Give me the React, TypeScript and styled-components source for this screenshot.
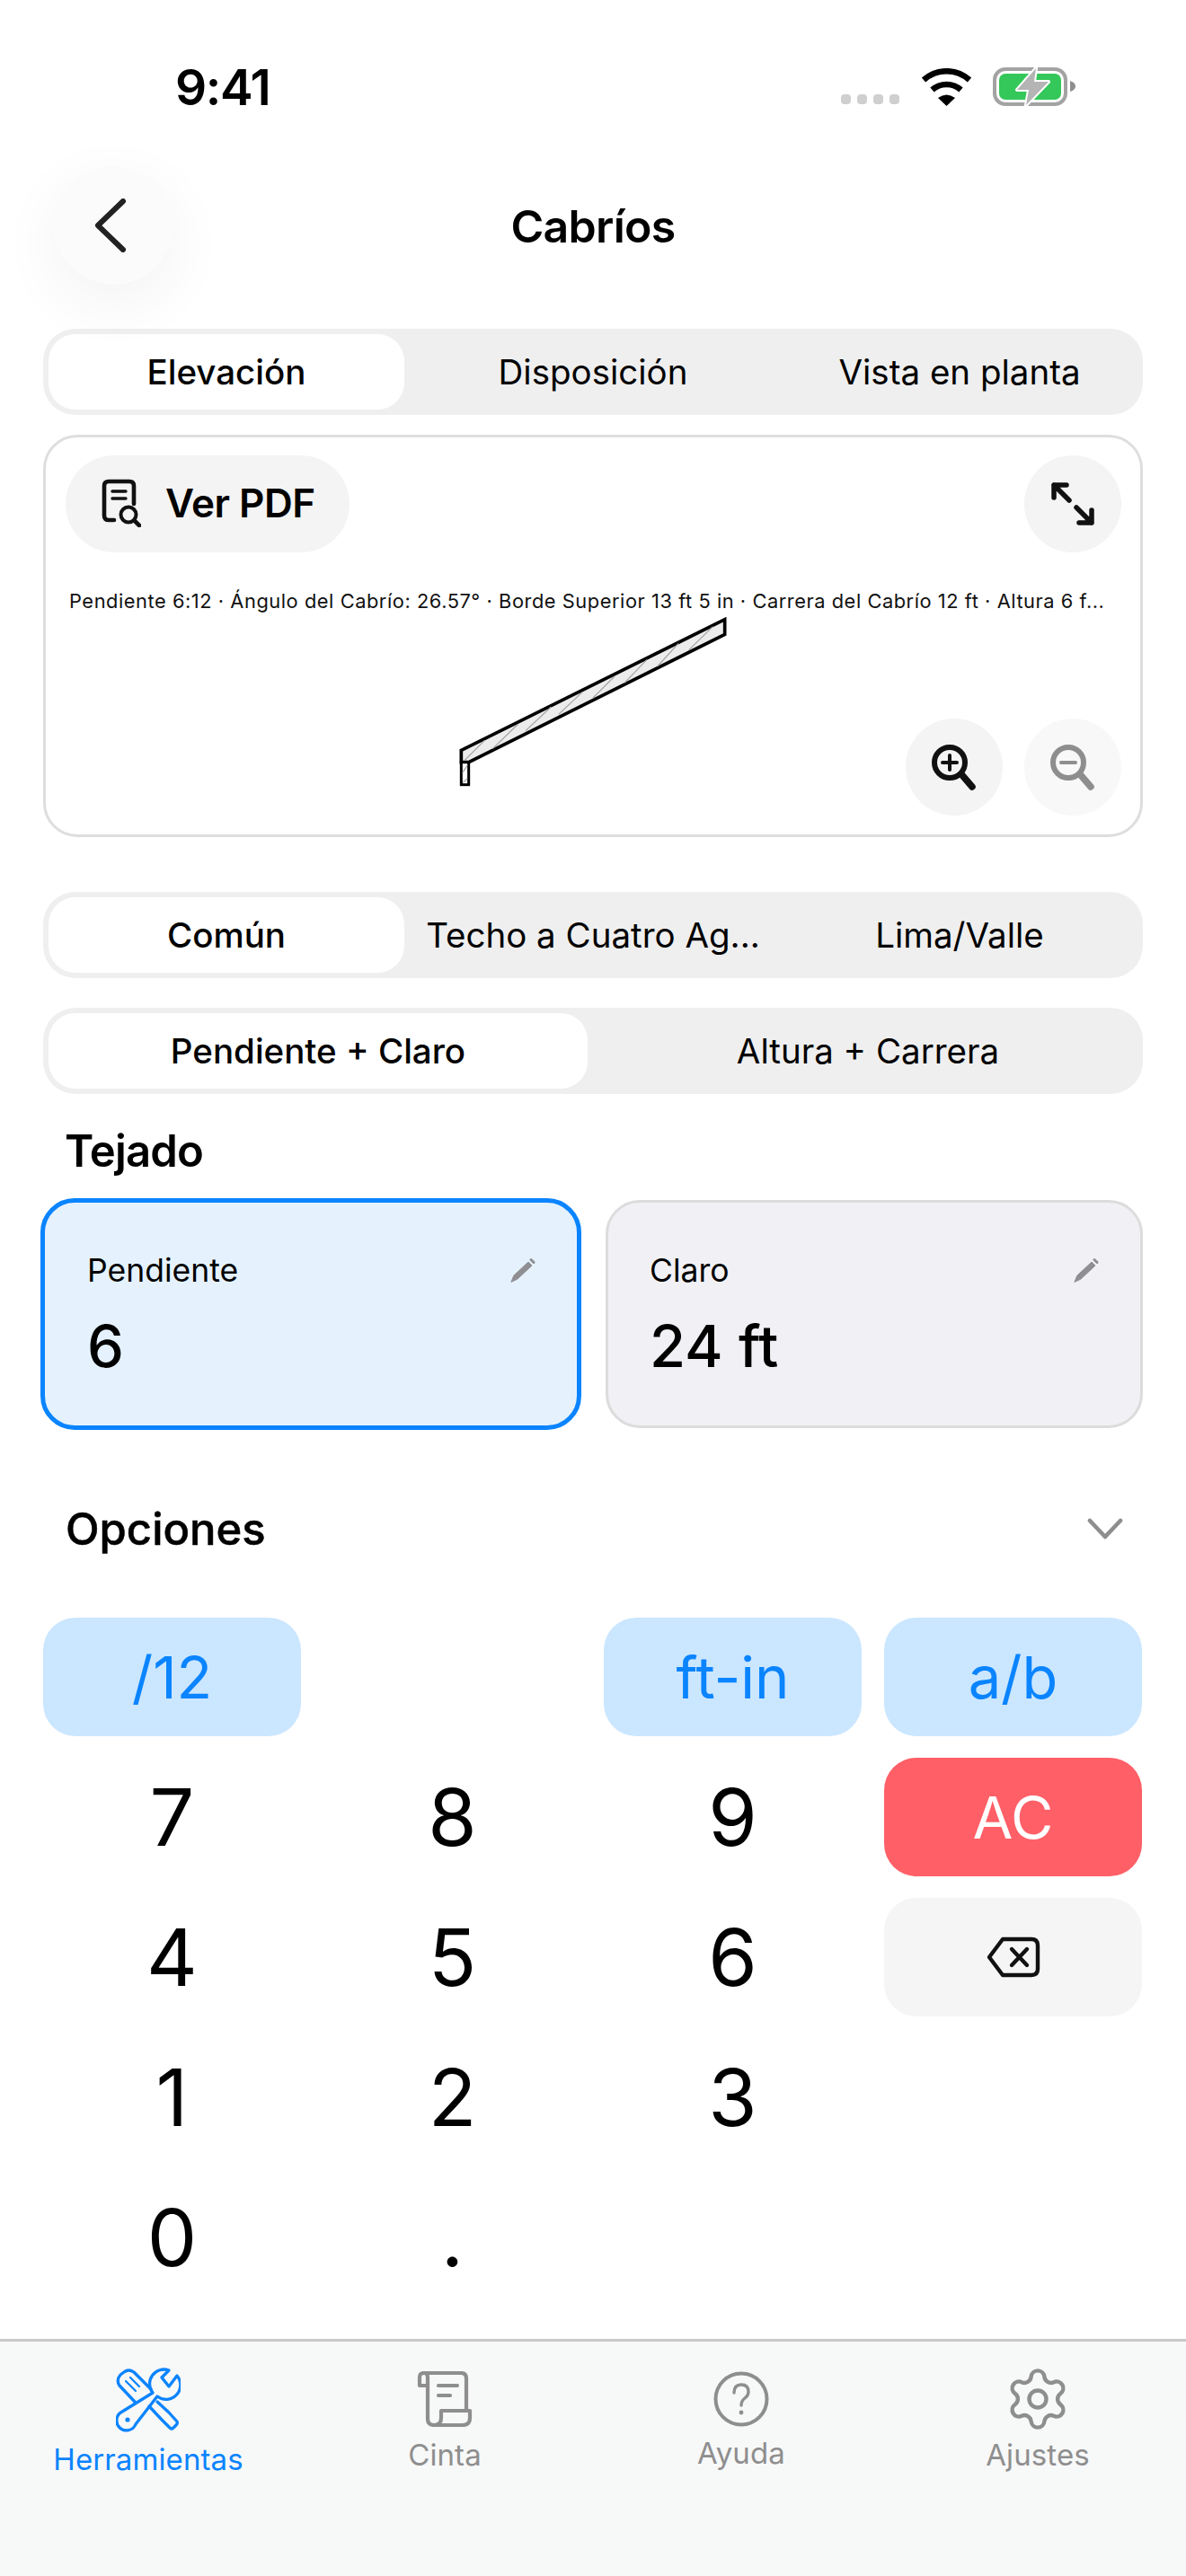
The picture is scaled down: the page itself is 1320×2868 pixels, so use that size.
import React from "react";
import styled, { createGlobalStyle } from "styled-components";

const Global = createGlobalStyle`
  html, body { margin: 0; padding: 0; background: #fff; }
  body { font-family: Inter, "Noto Sans", "Liberation Sans", sans-serif; color: #000; }
  * { box-sizing: border-box; }
`;

const Page = styled.div`
  width: 1320px; height: 2868px; display: flex; flex-direction: column;
  overflow: hidden; background: #fff;
`;
const StatusBar = styled.div`
  height: 185px; padding: 75px 123px 0 195px; display: flex;
  justify-content: space-between; align-items: flex-start;
`;
const Time = styled.div`font-size: 55px; font-weight: 600; line-height: 44px; letter-spacing: -1.4px;`;
const StatusIcons = styled.div`display: flex; align-items: flex-end; gap: 23px; height: 43px;`;
const Header = styled.div`
  height: 133px; margin: 0 48px; display: flex; align-items: center; justify-content: center; position: relative;
`;
const BackButton = styled.div`
  position: absolute; left: 12px; top: 0; width: 132px; height: 132px; border-radius: 50%;
  background: #fbfbfb; box-shadow: 0 20px 70px rgba(0,0,0,.055);
  display: flex; align-items: center; justify-content: center; padding-right: 6px;
`;
const Title = styled.h1`margin: 0; font-size: 50px; font-weight: 600; letter-spacing: -.7px;`;
const Content = styled.div`padding: 48px 48px 0; display: flex; flex-direction: column;`;
const Segment = styled.div<{ $cols: number; $mt?: number }>`
  display: grid; grid-template-columns: repeat(${p => p.$cols}, 1fr); gap: 12px; padding: 6px;
  height: 96px; border-radius: 36px; background: #efefef; margin-top: ${p => p.$mt ?? 0}px;
`;
const SegItem = styled.div<{ $on?: boolean }>`
  display: flex; align-items: center; justify-content: center; white-space: nowrap;
  font-size: 38.5px; font-weight: ${p => (p.$on ? 500 : 400)}; border-radius: 30px;
  background: ${p => (p.$on ? "#fff" : "transparent")};
`;
const Preview = styled.div`
  margin-top: 22px; height: 448px; border: 3px solid #dedede; border-radius: 38px; position: relative;
  padding: 20px 21px 0 22px; display: flex; flex-direction: column;
`;
const PreviewTop = styled.div`display: flex; justify-content: space-between;`;
const PdfButton = styled.div`
  height: 108px; width: 316px; border-radius: 54px; background: #f4f4f4; display: flex; align-items: center;
  padding-left: 40px; gap: 27px; font-size: 44px; font-weight: 600; letter-spacing: -.5px; padding-bottom: 3px;
`;
const RoundButton = styled.div<{ $faint?: boolean }>`
  width: 108px; height: 108px; border-radius: 50%; background: ${p => (p.$faint ? "#f8f8f8" : "#f4f4f4")};
  display: flex; align-items: center; justify-content: center;
`;
const Caption = styled.div`
  margin: 39px 0 0 4px; font-size: 21.8px; letter-spacing: .56px; line-height: 30px; white-space: nowrap; color: #111;
`;
const Drawing = styled.svg`display: block; align-self: center; margin: 3px 0 0 -2px;`;
const ZoomTools = styled.div`position: absolute; right: 21px; bottom: 21px; display: flex; gap: 24px;`;
const SectionTitle = styled.h2`margin: 35px 0 0 24px; font-size: 49px; line-height: 58px; font-weight: 600; letter-spacing: -.8px;`;
const Fields = styled.div`display: grid; grid-template-columns: 602px 598px; gap: 27px; margin: 23px -1px 0 -3px; align-items: start;`;
const Field = styled.div<{ $on?: boolean }>`
  height: ${p => (p.$on ? 258 : 254)}px; margin-top: ${p => (p.$on ? 0 : 2)}px; border-radius: 38px;
  border: ${p => (p.$on ? "5px solid #0a84ff" : "3px solid #dcdcdc")};
  background: ${p => (p.$on ? "#e5f2fd" : "#f1f1f5")};
  padding: ${p => (p.$on ? "53px 46px 0 47px" : "53px 46px 0 46px")};
  display: flex; flex-direction: column;
`;
const FieldHead = styled.div`display: flex; justify-content: space-between; align-items: center; height: 44px;`;
const FieldLabel = styled.div`font-size: 35.5px;`;
const FieldValue = styled.div`font-size: 65px; line-height: 80px; margin-top: 23px; font-weight: 500;`;
const OptionsRow = styled.div`
  margin: 67px 22px 0 25px; height: 86px; display: flex; align-items: center; justify-content: space-between;
  font-size: 49px; font-weight: 500;
  -webkit-text-stroke: .5px #000;
`;
const Keypad = styled.div`
  margin-top: 56px; display: grid; grid-template-columns: repeat(4, 287px); gap: 24px 25px; grid-auto-rows: 132px;
`;
const Key = styled.div<{ $kind?: "accent" | "danger" | "muted" }>`
  display: flex; align-items: center; justify-content: center; border-radius: 36px;
  font-size: ${p => (p.$kind ? 65 : 88)}px; font-weight: 400;
  background: ${p => ({ accent: "#cbe6ff", danger: "#ff5f67", muted: "#f5f5f5" }[p.$kind ?? "x" as "accent"] ?? "transparent")};
  color: ${p => ({ accent: "#0a84ff", danger: "#fff", muted: "#000" }[p.$kind ?? "x" as "accent"] ?? "#000")};
`;
const TabBar = styled.div`
  margin-top: auto; height: 264px; border-top: 3px solid #c9c9c9; background: #f7f8f8;
  display: grid; grid-template-columns: repeat(4, 1fr);
`;
const Tab = styled.div<{ $on?: boolean; $top: number; $gap: number }>`
  display: flex; flex-direction: column; align-items: center; padding-top: ${p => p.$top}px; gap: ${p => p.$gap}px;
  color: ${p => (p.$on ? "#0a84ff" : "#8e8e8e")}; font-size: 33px; line-height: 40px; letter-spacing: .1px;
`;
const TabIcon = styled.svg`display: block;`;

const Tools = () => (
  <TabIcon width="72" height="72" viewBox="0 0 72 72" fill="none" stroke="currentColor" strokeWidth="3.3" strokeLinejoin="round" strokeLinecap="round">
    <path d="M21 38 L4 20 Q0 14 5 8 L9 5 Q14 1 20 5 L39 24" />
    <path d="M11 15 L22 26 M16 11 L26 21" strokeWidth="2.2" />
    <path d="M46 38 L59 50 L68 60 Q69 62 67 64 L64 67 Q62 69 60 67 L51 58 L37 43" />
    <path d="M59 3 L51 11 L59 21 L68 9 A16 16 0 0 1 46 32 L22 63 A11 11 0 1 1 7 49 L41 28 A16 16 0 0 1 59 3 Z" />
    <circle cx="13" cy="58" r="2.6" fill="currentColor" stroke="none" />
  </TabIcon>
);
const Scroll = () => (
  <TabIcon width="62" height="62" viewBox="0 0 62 62" fill="none" stroke="currentColor" strokeWidth="4.2" strokeLinejoin="round" strokeLinecap="round">
    <path d="M12 16 H3 V7 Q3 2 8 2 H49 Q55 2 55 8 V43" />
    <path d="M12 7 V53 Q12 60 19 60 H51 Q59 60 59 52 V44 H27 V52 Q27 60 19 60" />
    <path d="M8 2 Q12 2 12 7" />
    <path d="M24 16 H45 M24 27 H37" />
  </TabIcon>
);
const Help = () => (
  <TabIcon width="62" height="62" viewBox="0 0 62 62" fill="none" stroke="currentColor" strokeLinecap="round">
    <circle cx="31" cy="31" r="28.5" strokeWidth="4" />
    <path d="M23 24 Q23 15 31 15 Q39 15 39 23 Q39 27 35 30 Q31 33 31 38" strokeWidth="3.4" />
    <circle cx="31" cy="46" r="2.4" fill="currentColor" stroke="none" />
  </TabIcon>
);
const Gear = () => (
  <TabIcon width="76" height="76" viewBox="0 0 24 24" fill="none" stroke="currentColor" strokeWidth="1.4" strokeLinejoin="round" strokeLinecap="round">
    <path d="M9.671 4.136a2.34 2.34 0 0 1 4.659 0 2.34 2.34 0 0 0 3.319 1.915 2.34 2.34 0 0 1 2.33 4.033 2.34 2.34 0 0 0 0 3.831 2.34 2.34 0 0 1-2.33 4.033 2.34 2.34 0 0 0-3.319 1.915 2.34 2.34 0 0 1-4.659 0 2.34 2.34 0 0 0-3.32-1.915 2.34 2.34 0 0 1-2.33-4.033 2.34 2.34 0 0 0 0-3.831A2.34 2.34 0 0 1 6.35 6.051a2.34 2.34 0 0 0 3.319-1.915" />
    <circle cx="12" cy="12" r="3" />
  </TabIcon>
);
const Pencil = () => (
  <svg width="29" height="29" viewBox="0 0 29 29" fill="none" stroke="#8e8e93" strokeLinecap="round">
    <path d="M2 27 L5 20 L21 5 L25 9 L9 24 Z" fill="#8e8e93" strokeWidth="1" strokeLinejoin="round" />
    <path d="M24 2.5 L27 5.5" strokeWidth="3" />
  </svg>
);
const Lens = ({ color, plus }: { color: string; plus?: boolean }) => (
  <svg width="54" height="54" viewBox="0 0 54 54" fill="none" stroke={color} strokeLinecap="round">
    <circle cx="22" cy="22" r="17" strokeWidth="6" />
    <path d="M35 35 L47 49" strokeWidth="7.5" />
    <path d={plus ? "M14 22 H30 M22 14 V30" : "M14 22 H30"} strokeWidth="4" />
  </svg>
);

const labels = ["7", "8", "9"];

export default function App() {
  return (
    <Page>
      <Global />
      <StatusBar>
        <Time>9:41</Time>
        <StatusIcons>
          <svg width="66" height="13" viewBox="0 0 66 13" fill="#cfcfcf">
            <rect x="0" y="0" width="11" height="11" rx="4" />
            <rect x="18" y="0" width="11" height="11" rx="4" />
            <rect x="36" y="0" width="11" height="11" rx="4" />
            <rect x="54" y="0" width="11" height="11" rx="4" />
          </svg>
          <svg width="57" height="42" viewBox="0 0 57 42" fill="none" stroke="#000" strokeWidth="6.5">
            <path d="M3 13 A38 38 0 0 1 54 13" />
            <path d="M12.5 24 A24 24 0 0 1 44.5 24" />
            <path d="M19 33 Q28.5 26 38 33 L28.5 42 Z" fill="#000" stroke="none" />
          </svg>
          <svg width="92" height="43" viewBox="0 0 92 43" fill="none">
            <rect x="2" y="2" width="79" height="39" rx="12" stroke="#a3a3a3" strokeWidth="4" />
            <rect x="7" y="7" width="69" height="29" rx="7" fill="#34c759" />
            <path d="M86 15 Q92 17 92 21 Q92 25 86 27 Z" fill="#8e8e8e" />
            <path d="M48 1 L27 25 H40 L37 42 L62 16 H46 Z" fill="#b4b4b4" stroke="#fff" strokeWidth="4" strokeLinejoin="round" paintOrder="stroke" />
          </svg>
        </StatusIcons>
      </StatusBar>
      <Header>
        <BackButton>
          <svg width="40" height="60" viewBox="0 0 40 60" fill="none" stroke="#222" strokeWidth="6" strokeLinecap="round" strokeLinejoin="round">
            <path d="M34 3 L6 30 L34 57" />
          </svg>
        </BackButton>
        <Title>Cabríos</Title>
      </Header>
      <Content>
        <Segment $cols={3}>
          <SegItem $on>Elevación</SegItem>
          <SegItem>Disposición</SegItem>
          <SegItem>Vista en planta</SegItem>
        </Segment>
        <Preview>
          <PreviewTop>
            <PdfButton>
              <svg width="44" height="54" viewBox="0 0 44 54" fill="none" stroke="#111" strokeWidth="4.6" strokeLinecap="round" strokeLinejoin="round">
                <path d="M14 46 H8 Q3 46 3 41 V8 Q3 3 8 3 H31 Q36 3 36 8 V28" />
                <path d="M12 14 H27 M12 22 H27" strokeWidth="3.4" />
                <circle cx="30" cy="40" r="8.5" strokeWidth="4" />
                <path d="M36.5 46.5 L42 52" />
              </svg>
              Ver PDF
            </PdfButton>
            <RoundButton>
              <svg width="50" height="50" viewBox="0 0 50 50" fill="none" stroke="#111" strokeWidth="5.5" strokeLinecap="round" strokeLinejoin="round">
                <path d="M4 18 V4 H18 M4 4 L21 21" />
                <path d="M46 32 V46 H32 M46 46 L29 29" />
              </svg>
            </RoundButton>
          </PreviewTop>
          <Caption>Pendiente 6:12 · Ángulo del Cabrío: 26.57° · Borde Superior 13 ft 5 in · Carrera del Cabrío 12 ft · Altura 6 f...</Caption>
          <Drawing width="300" height="190" viewBox="90 80 900 570">
            <path d="M100 565 V525 L980 88 V138 L125 565 Z" fill="#ececec" stroke="#000" strokeWidth="11" />
            <path d="M105 565L178 492M205 520L290 437M315 460L400 380M425 405L505 330M540 350L612 278M645 300L720 222M755 245L825 168M860 190L940 112" stroke="#a0a0a0" strokeWidth="3.5" />
            <rect x="100" y="565" width="25" height="75" fill="#fff" stroke="#000" strokeWidth="9" />
            <path d="M104 600L121 575M106 633L120 620" stroke="#a0a0a0" strokeWidth="3.5" />
          </Drawing>
          <ZoomTools>
            <RoundButton><Lens color="#111" plus /></RoundButton>
            <RoundButton $faint><Lens color="#8e8e8e" /></RoundButton>
          </ZoomTools>
        </Preview>
        <Segment $cols={3} $mt={61}>
          <SegItem $on>Común</SegItem>
          <SegItem>Techo a Cuatro Ag...</SegItem>
          <SegItem>Lima/Valle</SegItem>
        </Segment>
        <Segment $cols={2} $mt={33}>
          <SegItem $on>Pendiente + Claro</SegItem>
          <SegItem>Altura + Carrera</SegItem>
        </Segment>
        <SectionTitle>Tejado</SectionTitle>
        <Fields>
          <Field $on>
            <FieldHead><FieldLabel>Pendiente</FieldLabel><Pencil /></FieldHead>
            <FieldValue>6</FieldValue>
          </Field>
          <Field>
            <FieldHead><FieldLabel>Claro</FieldLabel><Pencil /></FieldHead>
            <FieldValue>24 ft</FieldValue>
          </Field>
        </Fields>
        <OptionsRow>
          Opciones
          <svg width="40" height="24" viewBox="0 0 40 24" fill="none" stroke="#8e8e8e" strokeWidth="4.6" strokeLinecap="round" strokeLinejoin="round">
            <path d="M3 3 L20 21 L37 3" />
          </svg>
        </OptionsRow>
        <Keypad>
          <Key $kind="accent">/12</Key>
          <div />
          <Key $kind="accent">ft-in</Key>
          <Key $kind="accent">a/b</Key>
          {labels.map(d => <Key key={d}>{d}</Key>)}
          <Key $kind="danger">AC</Key>
          <Key>4</Key><Key>5</Key><Key>6</Key>
          <Key $kind="muted">
            <svg width="60" height="46" viewBox="0 0 60 46" fill="none" stroke="#111" strokeWidth="4.4" strokeLinecap="round" strokeLinejoin="round">
              <path d="M18 3 H50 Q57 3 57 10 V36 Q57 43 50 43 H18 L3 23 Z" />
              <path d="M28 14 L45 32 M45 14 L28 32" />
            </svg>
          </Key>
          <Key>1</Key><Key>2</Key><Key>3</Key><div />
          <Key>0</Key><Key>.</Key>
        </Keypad>
      </Content>
      <TabBar>
        <Tab $on $top={29} $gap={10}><Tools />Herramientas</Tab>
        <Tab $top={33} $gap={11}><Scroll />Cinta</Tab>
        <Tab $top={33} $gap={9}><Help />Ayuda</Tab>
        <Tab $top={26} $gap={4}><Gear />Ajustes</Tab>
      </TabBar>
    </Page>
  );
}
